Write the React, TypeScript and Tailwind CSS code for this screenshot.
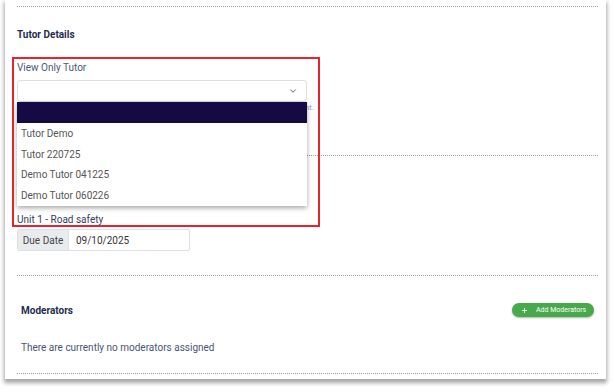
import React from "react";
import { ChevronDown, Plus } from "lucide-react";

const tutors = ["Tutor Demo", "Tutor 220725", "Demo Tutor 041225", "Demo Tutor 060226"];

const App = () => {
  return (
    <div
      className="relative w-full h-[390px] bg-white pl-[5px] pr-[7px] overflow-hidden"
      style={{ fontFamily: "Roboto, 'Liberation Sans', sans-serif" }}
    >
      <div className="bg-white pl-[12px] pr-[8px] pt-[6px] pb-[5px] shadow-[0_3px_4px_1px_rgba(0,0,0,0.35)]">
        {/* Tutor details */}
        <div className="border-t border-dotted border-[#9c9c9c]" />
        <h2 className="mt-[21px] text-[10px] leading-[14px] font-bold text-[#1f2d4d]">Tutor Details</h2>

        <div className="mt-[19px] text-[10px] leading-[14px] text-[#4b5a78]">View Only Tutor</div>
        <div className="relative mt-[5px] w-[290px]">
          <div className="h-[22px] border border-[#dcdfe4] rounded-[3px] bg-white flex items-center justify-end pr-[8px]">
            <ChevronDown size={10} strokeWidth={2.2} className="text-[#555]" />
          </div>
          <div className="w-[297px] h-[12px] overflow-hidden whitespace-nowrap text-right text-[8px] leading-[12px] text-[#9aa1ad]">
            The view only tutor can see the submissions but cannot mark the assessment.
          </div>

          {/* open select menu */}
          <div className="absolute left-0 top-[22px] w-[290px] bg-white shadow-[0_2px_5px_rgba(0,0,0,0.35)] z-10">
            <div className="h-[21px] bg-[#160a45]" />
            {tutors.map((t) => (
              <div key={t} className="h-[20.75px] pl-[4px] flex items-center text-[10px] text-[#555]">
                {t}
              </div>
            ))}
          </div>
        </div>

        <div className="mt-[41px] border-t border-dotted border-[#9c9c9c]" />
        <div className="mt-[57px] text-[10px] leading-[14px] text-[#2f3e66]">Unit 1 - Road safety</div>
        <div className="mt-[2px] flex w-[173px] h-[22px] border border-[#dcdfe4] rounded-[2px] text-[10px]">
          <div className="w-[51px] bg-[#e9ecef] border-r border-[#dcdfe4] flex items-center justify-center text-[#444]">
            Due Date
          </div>
          <div className="flex-1 flex items-center pl-[7px] text-[#333]">09/10/2025</div>
        </div>

        {/* Moderators */}
        <div className="mt-[24px] border-t border-dotted border-[#9c9c9c]" />
        <div className="mt-[27px] px-[4px] flex items-center justify-between h-[14px]">
          <h2 className="text-[10px] font-bold text-[#1f2d4d]">Moderators</h2>
          <button className="h-[14px] w-[82px] rounded-full bg-[#46a94a] text-white text-[7px] flex items-center gap-[8px] pl-[9px] shadow-[0_1px_2px_rgba(0,0,0,0.3)]">
            <Plus size={7} strokeWidth={3} />
            <span>Add Moderators</span>
          </button>
        </div>
        <div className="mt-[24px] px-[4px] text-[10px] leading-[14px] text-[#4a5570]">
          There are currently no moderators assigned
        </div>
        <div className="mt-[18px] border-t border-dotted border-[#9c9c9c]" />
      </div>

      {/* red annotation frame */}
      <div className="absolute left-[12px] top-[57px] w-[308px] h-[170px] border-2 border-[#e8232b] pointer-events-none z-20" />
    </div>
  );
};

export default App;
